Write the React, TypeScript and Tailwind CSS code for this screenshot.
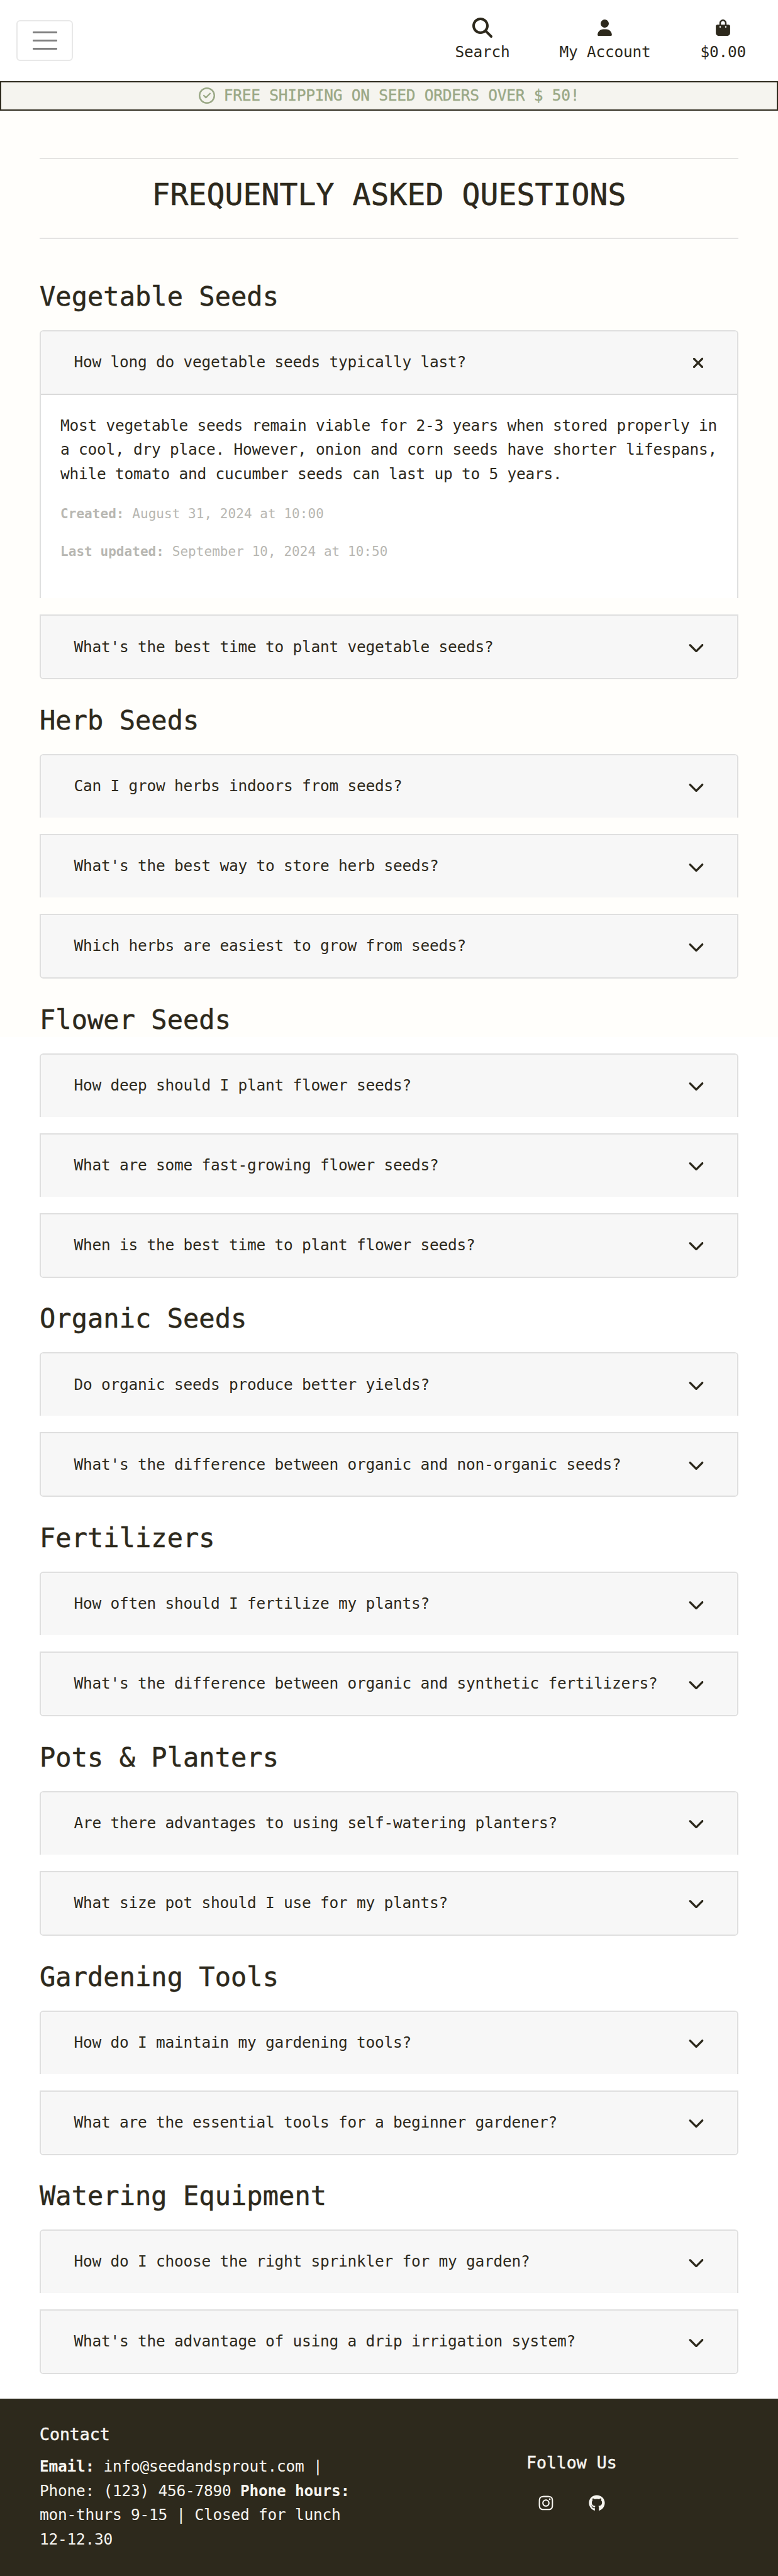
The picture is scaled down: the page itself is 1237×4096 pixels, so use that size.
import {
  FaBagShopping,
  FaChevronDown,
  FaGithub,
  FaInstagram,
  FaMagnifyingGlass,
  FaRegCircleCheck,
  FaUser,
  FaXmark,
} from "react-icons/fa6";
import type { ReactNode } from "react";

type Section = { title: string; questions: string[] };

const sections: Section[] = [
  {
    title: "Vegetable Seeds",
    questions: [
      "How long do vegetable seeds typically last?",
      "What's the best time to plant vegetable seeds?",
    ],
  },
  {
    title: "Herb Seeds",
    questions: [
      "Can I grow herbs indoors from seeds?",
      "What's the best way to store herb seeds?",
      "Which herbs are easiest to grow from seeds?",
    ],
  },
  {
    title: "Flower Seeds",
    questions: [
      "How deep should I plant flower seeds?",
      "What are some fast-growing flower seeds?",
      "When is the best time to plant flower seeds?",
    ],
  },
  {
    title: "Organic Seeds",
    questions: [
      "Do organic seeds produce better yields?",
      "What's the difference between organic and non-organic seeds?",
    ],
  },
  {
    title: "Fertilizers",
    questions: [
      "How often should I fertilize my plants?",
      "What's the difference between organic and synthetic fertilizers?",
    ],
  },
  {
    title: "Pots & Planters",
    questions: [
      "Are there advantages to using self-watering planters?",
      "What size pot should I use for my plants?",
    ],
  },
  {
    title: "Gardening Tools",
    questions: [
      "How do I maintain my gardening tools?",
      "What are the essential tools for a beginner gardener?",
    ],
  },
  {
    title: "Watering Equipment",
    questions: [
      "How do I choose the right sprinkler for my garden?",
      "What's the advantage of using a drip irrigation system?",
    ],
  },
];

function NavItem({ icon, label }: { icon: ReactNode; label: string }) {
  return (
    <a className="flex flex-col items-center gap-[7px]">
      <span className="flex h-8 items-center">{icon}</span>
      <span className="leading-8">{label}</span>
    </a>
  );
}

function Header() {
  return (
    <header className="flex h-[129px] items-center justify-between bg-white pr-[51px] pl-[26px]">
      <button className="flex h-[65px] w-[90px] flex-col items-center justify-center gap-[10px] rounded-[6px] border-2 border-[#e8e8e8]">
        <span className="h-[3px] w-[39px] rounded-[1px] bg-[#808080]" />
        <span className="h-[3px] w-[39px] rounded-[1px] bg-[#808080]" />
        <span className="h-[3px] w-[39px] rounded-[1px] bg-[#808080]" />
      </button>
      <nav className="flex gap-[79px] self-start pt-7">
        <NavItem icon={<FaMagnifyingGlass className="size-8" />} label="Search" />
        <NavItem icon={<FaUser className="h-[26px] w-[23px]" />} label="My Account" />
        <NavItem icon={<FaBagShopping className="h-[26px] w-[23px]" />} label="$0.00" />
      </nav>
    </header>
  );
}

function Answer() {
  return (
    <div className="h-[323.3px] bg-white pt-[29.5px] pl-[31px]">
      <p className="leading-[38.7px]">
        Most vegetable seeds remain viable for 2-3 years when stored properly in
        <br />
        a cool, dry place. However, onion and corn seeds have shorter lifespans,
        <br />
        while tomato and cucumber seeds can last up to 5 years.
      </p>
      <p className="mt-[26px] text-[21px] leading-[34px] tracking-[0.05px] text-[#b8b7b2]">
        <strong>Created:</strong> August 31, 2024 at 10:00
      </p>
      <p className="mt-[26px] text-[21px] leading-[34px] tracking-[0.05px] text-[#b8b7b2]">
        <strong>Last updated:</strong> September 10, 2024 at 10:50
      </p>
    </div>
  );
}

function Item({ question, open }: { question: string; open: boolean }) {
  return (
    <div className="overflow-hidden border-2 border-b-0 border-[#dfdfdf] first:rounded-t-[6px] last:rounded-b-[6px] last:border-b-2">
      <div className="flex h-[99px] items-center justify-between bg-[#f7f7f7] pr-[52.5px] pl-[52.5px]">
        <span className="whitespace-nowrap">{question}</span>
        {open ? (
          <FaXmark className="h-[26px] w-[20px]" />
        ) : (
          <FaChevronDown className="size-[26px]" />
        )}
      </div>
      {open && (
        <div className="border-t-2 border-[#dadada]">
          <Answer />
        </div>
      )}
    </div>
  );
}

function Footer() {
  return (
    <footer className="mt-[39px] flex h-[284px] bg-[#2d291c] pl-[63px] text-[#f7f5f0]">
      <div className="w-[774px] shrink-0 pt-[41px]">
        <h5 className="mb-4 text-[26.5px] leading-8 tracking-normal [-webkit-text-stroke:0.5px]">
          Contact
        </h5>
        <p className="leading-[38.5px]">
          <strong>Email:</strong> info@seedandsprout.com |
          <br />
          Phone: (123) 456-7890 <strong>Phone hours:</strong>
          <br />
          mon-thurs 9-15 | Closed for lunch
          <br />
          12-12.30
        </p>
      </div>
      <div className="flex flex-col items-center pt-[86px]">
        <h5 className="text-[26.5px] leading-8 tracking-normal [-webkit-text-stroke:0.5px]">
          Follow Us
        </h5>
        <div className="mt-[35px] flex gap-[55px]">
          <FaInstagram className="size-[26px]" />
          <FaGithub className="size-[26px]" />
        </div>
      </div>
    </footer>
  );
}

export default function App() {
  return (
    <div className="h-[4096px] w-[1237px] overflow-hidden bg-[linear-gradient(#fffefb_1649px,#ffffff_1649px)] font-['DejaVu_Sans_Mono',monospace] text-[24.5px] tracking-[-0.25px] text-[#2d291c]">
      <Header />
      <div className="flex h-[47px] items-center justify-center gap-[14px] border-2 border-[#2d291c] bg-[#f5f4ef] text-[#9aa886]">
        <FaRegCircleCheck className="mb-[2px] size-[26px]" />
        <span className="[-webkit-text-stroke:0.4px]">FREE SHIPPING ON SEED ORDERS OVER $ 50!</span>
      </div>
      <main className="mx-[63px] pt-[75px]">
        <h1 className="mb-[26.4px] flex h-[129px] items-center justify-center border-y-2 border-[#e5e4e2] pb-[13px] text-5xl tracking-[0.1px] [-webkit-text-stroke:0.6px]">
          FREQUENTLY ASKED QUESTIONS
        </h1>
        {sections.map((section, s) => (
          <section key={section.title}>
            <h2 className="pt-[40.7px] pb-7 text-[42px] leading-[50px] tracking-[0.05px] [-webkit-text-stroke:0.5px]">
              {section.title}
            </h2>
            <div className="flex flex-col gap-[26px]">
              {section.questions.map((q, i) => (
                <Item key={q} question={q} open={s === 0 && i === 0} />
              ))}
            </div>
          </section>
        ))}
      </main>
      <Footer />
    </div>
  );
}
